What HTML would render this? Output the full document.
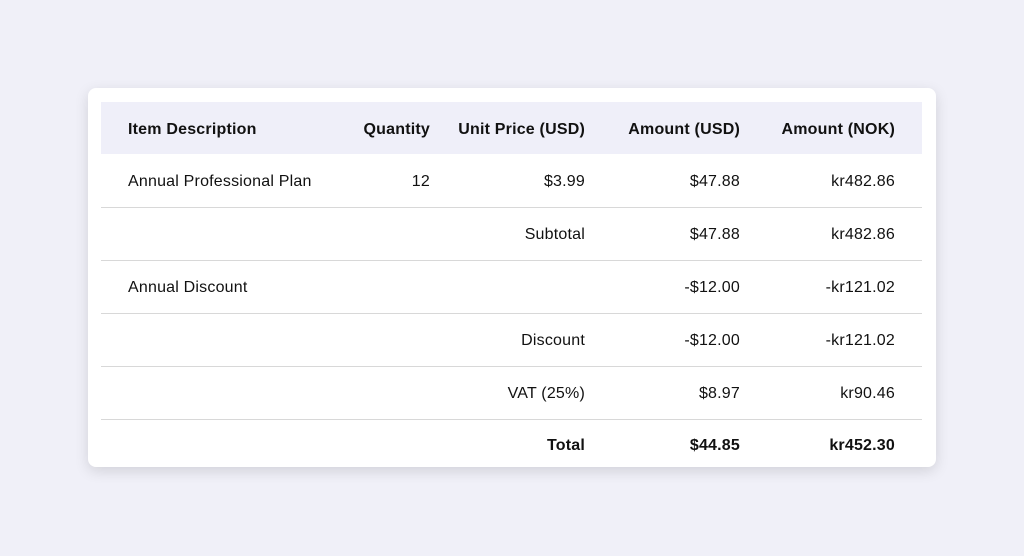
<!DOCTYPE html>
<html><head><style>
body{margin:0;width:1024px;height:556px;background:#f0f0f8;font-family:"Liberation Sans",sans-serif;overflow:hidden}
.card{position:absolute;left:88px;top:88px;width:848px;height:379px;background:#fff;border-radius:8px;box-shadow:0 4px 14px rgba(0,0,0,0.13)}
table{position:absolute;left:13px;top:14px;width:821px;border-collapse:collapse;table-layout:fixed}
td,th{height:53px;padding:3px 27px 0 0;box-sizing:border-box;text-align:right;font-size:16px;color:#111;border-bottom:1px solid #d8d8d8;white-space:nowrap;letter-spacing:0.2px}
th{background:#efeff9;border-bottom:none;font-weight:bold;height:52px}
td:first-child,th:first-child{text-align:left;padding-left:27px}
tr:last-child td{border-bottom:none;font-weight:bold;height:47px;padding-top:6px}
</style></head><body>
<div class="card"><table>
<colgroup><col style="width:260px"><col style="width:96px"><col style="width:155px"><col style="width:155px"><col style="width:155px"></colgroup>
<tr><th>Item Description</th><th>Quantity</th><th>Unit Price (USD)</th><th>Amount (USD)</th><th>Amount (NOK)</th></tr>
<tr><td>Annual Professional Plan</td><td>12</td><td>$3.99</td><td>$47.88</td><td>kr482.86</td></tr>
<tr><td></td><td></td><td>Subtotal</td><td>$47.88</td><td>kr482.86</td></tr>
<tr><td>Annual Discount</td><td></td><td></td><td>-$12.00</td><td>-kr121.02</td></tr>
<tr><td></td><td></td><td>Discount</td><td>-$12.00</td><td>-kr121.02</td></tr>
<tr><td></td><td></td><td>VAT (25%)</td><td>$8.97</td><td>kr90.46</td></tr>
<tr><td></td><td></td><td>Total</td><td>$44.85</td><td>kr452.30</td></tr>
</table></div>
</body></html>
